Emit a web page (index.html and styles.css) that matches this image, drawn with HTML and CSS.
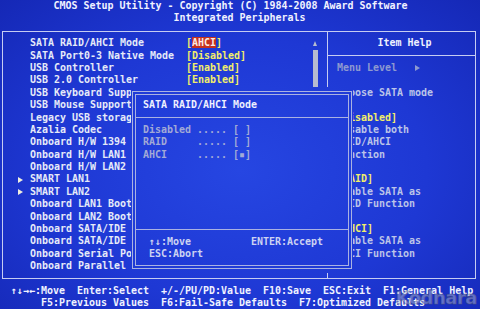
FILE: index.html
```html
<!DOCTYPE html>
<html lang="en">
  <head>
    <meta charset="UTF-8" />
    <meta name="viewport" content="width=device-width, initial-scale=1.0" />
    <title>CMOS Setup Utility - Integrated Peripherals</title>
    <link rel="stylesheet" href="styles.css">
  </head>
  <body>
    <div id="screen">
      <div class="title">
        <div class="title-main">CMOS Setup Utility - Copyright (C) 1984-2008 Award Software</div>
        <div>Integrated Peripherals</div>
      </div>

      <div id="frame">
        <div id="left-pane">
          <div class="items">
            <div class="item"><span class="mark"></span><span class="name">SATA RAID/AHCI Mode</span><span class="value">[<span class="selected">AHCI</span>]</span></div>
            <div class="item"><span class="mark"></span><span class="name">SATA Port0-3 Native Mode</span><span class="value">[Disabled]</span></div>
            <div class="item"><span class="mark"></span><span class="name">USB Controller</span><span class="value">[Enabled]</span></div>
            <div class="item"><span class="mark"></span><span class="name">USB 2.0 Controller</span><span class="value">[Enabled]</span></div>
            <div class="item"><span class="mark"></span><span class="name">USB Keyboard Support</span><span class="value">[Enabled]</span></div>
            <div class="item"><span class="mark"></span><span class="name">USB Mouse Support</span><span class="value">[Disabled]</span></div>
            <div class="item"><span class="mark"></span><span class="name">Legacy USB storage detect</span><span class="value">[Enabled]</span></div>
            <div class="item"><span class="mark"></span><span class="name">Azalia Codec</span><span class="value">[Auto]</span></div>
            <div class="item"><span class="mark"></span><span class="name">Onboard H/W 1394</span><span class="value">[Enabled]</span></div>
            <div class="item"><span class="mark"></span><span class="name">Onboard H/W LAN1</span><span class="value">[Enabled]</span></div>
            <div class="item"><span class="mark"></span><span class="name">Onboard H/W LAN2</span><span class="value">[Enabled]</span></div>
            <div class="item"><span class="mark"><span class="tri"></span></span><span class="name">SMART LAN1</span><span class="value">[Press Enter]</span></div>
            <div class="item"><span class="mark"><span class="tri"></span></span><span class="name">SMART LAN2</span><span class="value">[Press Enter]</span></div>
            <div class="item"><span class="mark"></span><span class="name">Onboard LAN1 Boot ROM</span><span class="value">[Disabled]</span></div>
            <div class="item"><span class="mark"></span><span class="name">Onboard LAN2 Boot ROM</span><span class="value">[Disabled]</span></div>
            <div class="item"><span class="mark"></span><span class="name">Onboard SATA/IDE Device</span><span class="value">[Enabled]</span></div>
            <div class="item"><span class="mark"></span><span class="name">Onboard SATA/IDE Mode</span><span class="value">[IDE]</span></div>
            <div class="item"><span class="mark"></span><span class="name">Onboard Serial Port 1</span><span class="value">[3F8/IRQ4]</span></div>
            <div class="item"><span class="mark"></span><span class="name">Onboard Parallel Port</span><span class="value">[378/IRQ7]</span></div>
          </div>
          <div class="scroll">
            <div class="scroll-up"></div>
            <div class="scroll-bar"></div>
          </div>
        </div>

        <div id="right-pane">
          <div class="help-head">Item Help</div>
          <div class="help-rule"></div>
          <div class="help-line dim">Menu Level   <span class="tri"></span></div>
          <div class="help-line"></div>
          <div class="help-line">Choose SATA mode</div>
          <div class="help-line"></div>
          <div class="help-line"><span class="hl">[Disabled]</span></div>
          <div class="help-line">Disable both</div>
          <div class="help-line">RAID/AHCI</div>
          <div class="help-line">function</div>
          <div class="help-line"></div>
          <div class="help-line"><span class="hl">[RAID]</span></div>
          <div class="help-line">Enable SATA as</div>
          <div class="help-line">RAID Function</div>
          <div class="help-line"></div>
          <div class="help-line"><span class="hl">[AHCI]</span></div>
          <div class="help-line">Enable SATA as</div>
          <div class="help-line">AHCI Function</div>
          <div class="help-line"></div>
        </div>
      </div>

      <div class="keys keys-top">
        <span>↑↓→←:Move</span>
        <span>Enter:Select</span>
        <span>+/-/PU/PD:Value</span>
        <span>F10:Save</span>
        <span>ESC:Exit</span>
        <span>F1:General Help</span>
      </div>
      <div class="keys keys-bottom">
        <span>F5:Previous Values</span>
        <span>F6:Fail-Safe Defaults</span>
        <span>F7:Optimized Defaults</span>
      </div>

      <div id="dialog">
        <div class="dialog-box">
          <div class="dialog-inner">
            <div class="dialog-title">SATA RAID/AHCI Mode</div>
            <div class="rule"></div>
            <div class="options">
              <div class="option"><span class="opt-name">Disabled</span>..... [ ]</div>
              <div class="option"><span class="opt-name">RAID</span>..... [ ]</div>
              <div class="option"><span class="opt-name">AHCI</span>..... [▪]</div>
            </div>
            <div class="rule"></div>
            <div class="dialog-keys">
              <span>↑↓:Move</span>
              <span>ENTER:Accept</span>
              <span>ESC:Abort</span>
            </div>
          </div>
        </div>
      </div>

      <div class="watermark">Kodnara</div>
    </div>
  </body>
</html>
```

FILE: styles.css
```css
body {
  margin: 0;
  background-color: #1a30cc;
  overflow: hidden;
}

/* 80x25 text screen: one cell is 1ch x 12.4px */
#screen {
  position: relative;
  width: 481px;
  height: 309px;
  margin-left: -1px;
  overflow: hidden;
  font-family: "DejaVu Sans Mono", "Liberation Mono", monospace;
  font-size: 9.97px;
  font-weight: bold;
  line-height: 12.4px;
  color: #e6eaf8;
  background: radial-gradient(ellipse at 50% 55%, #2646e2 0%, #1e38d4 55%, #1528b6 100%) fixed;
}

.title {
  text-align: center;
  color: #f0f2ff;
}

.title-main {
  padding-right: 3ch;
}

#frame {
  display: flex;
  width: 79ch;
  margin: 5.7px 0 5.7px 0.5ch;
  border: 1px solid #c6ccf2;
  box-sizing: border-box;
}

#left-pane {
  display: flex;
  width: 54ch;
  padding: 5.7px 0 5.7px 2.5ch;
  box-sizing: border-box;
}

.items {
  width: 49ch;
}

.item {
  display: grid;
  grid-template-columns: 2ch 26ch 1fr;
  height: 12.4px;
}

.name {
  white-space: nowrap;
  overflow: hidden;
}

.value {
  color: #f2ee6a;
  white-space: pre;
}

.selected {
  background-color: #c4301e;
  color: #fbe9e4;
}

.mark {
  display: flex;
  align-items: center;
}

.tri {
  display: inline-block;
  width: 0;
  height: 0;
  border-left: 5px solid #f0eede;
  border-top: 3px solid transparent;
  border-bottom: 3px solid transparent;
}

.scroll {
  width: 1ch;
}

.scroll-up {
  display: flex;
  justify-content: center;
  align-items: center;
  height: 12.4px;
}

.scroll-up::before {
  content: "";
  border-left: 2.5px solid transparent;
  border-right: 2.5px solid transparent;
  border-bottom: 5px solid #b6bcd0;
}

.scroll-bar {
  width: 5px;
  height: 37.2px;
  margin: 0 auto;
  background-color: #b6bcd0;
}

#right-pane {
  flex: 1;
  padding: 5.7px 0;
  border-left: 1px solid #c6ccf2;
}

.help-head {
  height: 12.4px;
  padding-left: 1ch;
  text-align: center;
  color: #f0f2ff;
}

.help-rule {
  height: 1px;
  margin: 5.7px 0;
  background-color: #c6ccf2;
}

.help-line {
  height: 12.4px;
  padding-left: 1.5ch;
  white-space: pre;
  color: #bcc4e8;
}

.help-line.dim {
  color: #8e9ad0;
}

.help-line.dim .tri {
  border-left-color: #8e9ad0;
}

.hl {
  color: #f2ee6a;
}

.keys {
  display: flex;
  gap: 2ch;
  white-space: pre;
  color: #f0f2ff;
}

.keys-top {
  padding-left: 2ch;
}

.keys-bottom {
  padding-left: 7ch;
}

/* the popup fills whole cells (cols 22-58, rows 7-21); its double line runs through the cell centres */
#dialog {
  position: absolute;
  left: 22ch;
  top: 86.8px;
  width: 37ch;
  height: 186px;
  padding: 4.2px calc(0.5ch - 2px);
  box-sizing: border-box;
  background: radial-gradient(ellipse at 50% 55%, #2646e2 0%, #1e38d4 55%, #1528b6 100%) fixed;
}

.dialog-box {
  height: 100%;
  padding: 2px;
  border: 1px solid #aab2e2;
  box-sizing: border-box;
}

.dialog-inner {
  display: flex;
  flex-direction: column;
  height: 100%;
  padding: 4.2px 0;
  border: 1px solid #aab2e2;
  box-sizing: border-box;
}

.dialog-title {
  padding-left: calc(1.5ch - 2px);
  color: #eef0ff;
}

.rule {
  height: 1px;
  margin: 5.7px 0;
  background-color: #aab2e2;
}

.options {
  flex: 1;
  padding-left: calc(1.5ch - 2px);
  color: #a2aad6;
}

.option {
  white-space: pre;
}

.opt-name {
  display: inline-block;
  width: 9ch;
}

.dialog-keys {
  display: grid;
  grid-template-columns: 17ch auto;
  padding-left: calc(2.5ch - 2px);
  color: #cdd3f2;
}

.watermark {
  position: absolute;
  right: 3px;
  bottom: 0;
  font-family: "DejaVu Sans", sans-serif;
  font-size: 18px;
  font-weight: bold;
  line-height: 22px;
  letter-spacing: -0.5px;
  color: rgba(190, 196, 220, 0.45);
  -webkit-text-stroke: 1px rgba(80, 84, 110, 0.45);
}
```
